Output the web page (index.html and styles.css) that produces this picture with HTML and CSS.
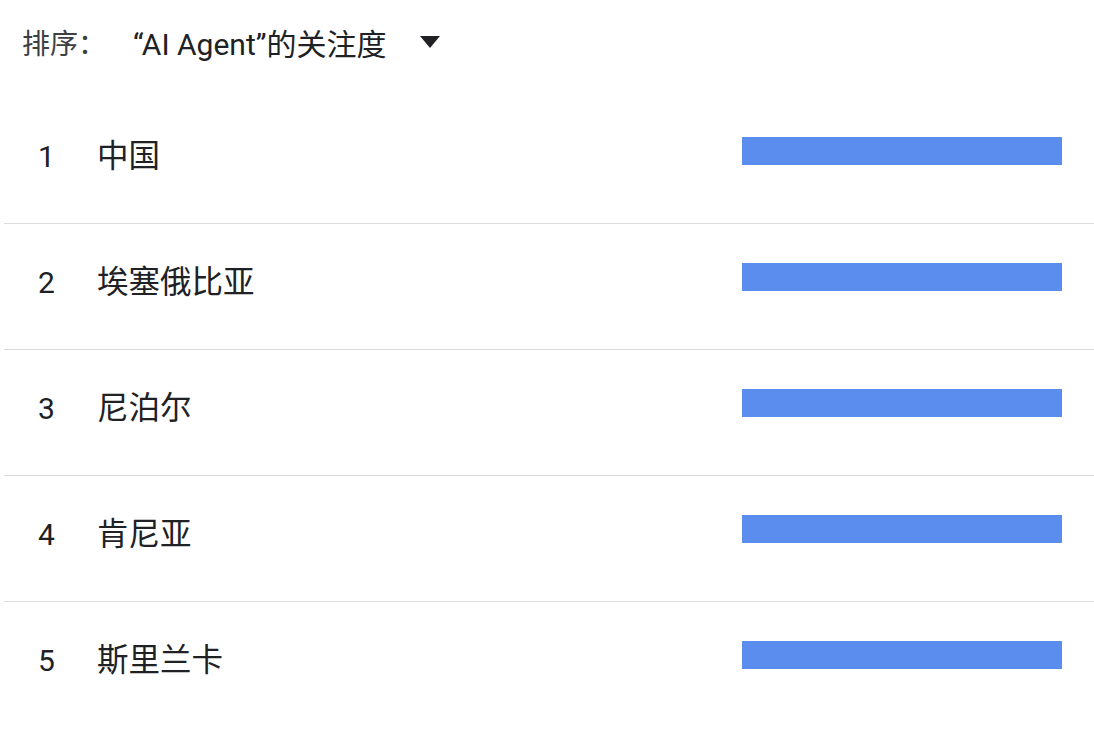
FILE: index.html
```html
<!DOCTYPE html>
<html lang="zh-CN">
<head>
<meta charset="utf-8">
<link rel="stylesheet" href="styles.css">
</head>
<body>
<div class="sort-bar">
  <span class="sort-label">排序：</span>
  <span class="sort-value">“AI Agent”的关注度</span>
  <svg class="caret" width="20" height="12" viewBox="0 0 20 12"><path d="M0 0 L20 0 L10 12 Z" fill="#202124"/></svg>
</div>
<div class="list">
  <div class="row"><span class="rank">1</span><span class="name">中国</span><span class="bar"></span></div>
  <div class="row"><span class="rank">2</span><span class="name">埃塞俄比亚</span><span class="bar"></span></div>
  <div class="row"><span class="rank">3</span><span class="name">尼泊尔</span><span class="bar"></span></div>
  <div class="row"><span class="rank">4</span><span class="name">肯尼亚</span><span class="bar"></span></div>
  <div class="row last"><span class="rank">5</span><span class="name">斯里兰卡</span><span class="bar"></span></div>
</div>
</body>
</html>
```

FILE: styles.css
```css
html, body {
  margin: 0;
  padding: 0;
  background: #ffffff;
}
body {
  font-family: "Roboto", "Noto Sans CJK SC", sans-serif;
  color: #202124;
}
.sort-bar {
  display: flex;
  align-items: center;
  height: 84px;
  padding-left: 22px;
  font-size: 30px;
}
.sort-label {
  color: #3c4043;
  width: 111px;
  font-size: 28px;
}
.sort-value {
  color: #202124;
}
.caret {
  margin-left: 34px;
}
.list {
  margin-left: 4px;
  margin-top: 14px;
}
.row {
  display: flex;
  align-items: flex-start;
  height: 125px;
  border-bottom: 1px solid #dadce0;
  padding-left: 34px;
  padding-right: 32px;
}
.row.last {
  border-bottom: none;
}
.rank {
  width: 59px;
  margin-top: 39px;
  font-size: 30px;
  line-height: 40px;
}
.name {
  flex: 1;
  margin-top: 39px;
  font-size: 31.5px;
  line-height: 40px;
}
.bar {
  width: 320px;
  height: 28px;
  margin-top: 39px;
  background: #5b8dee;
}
```
